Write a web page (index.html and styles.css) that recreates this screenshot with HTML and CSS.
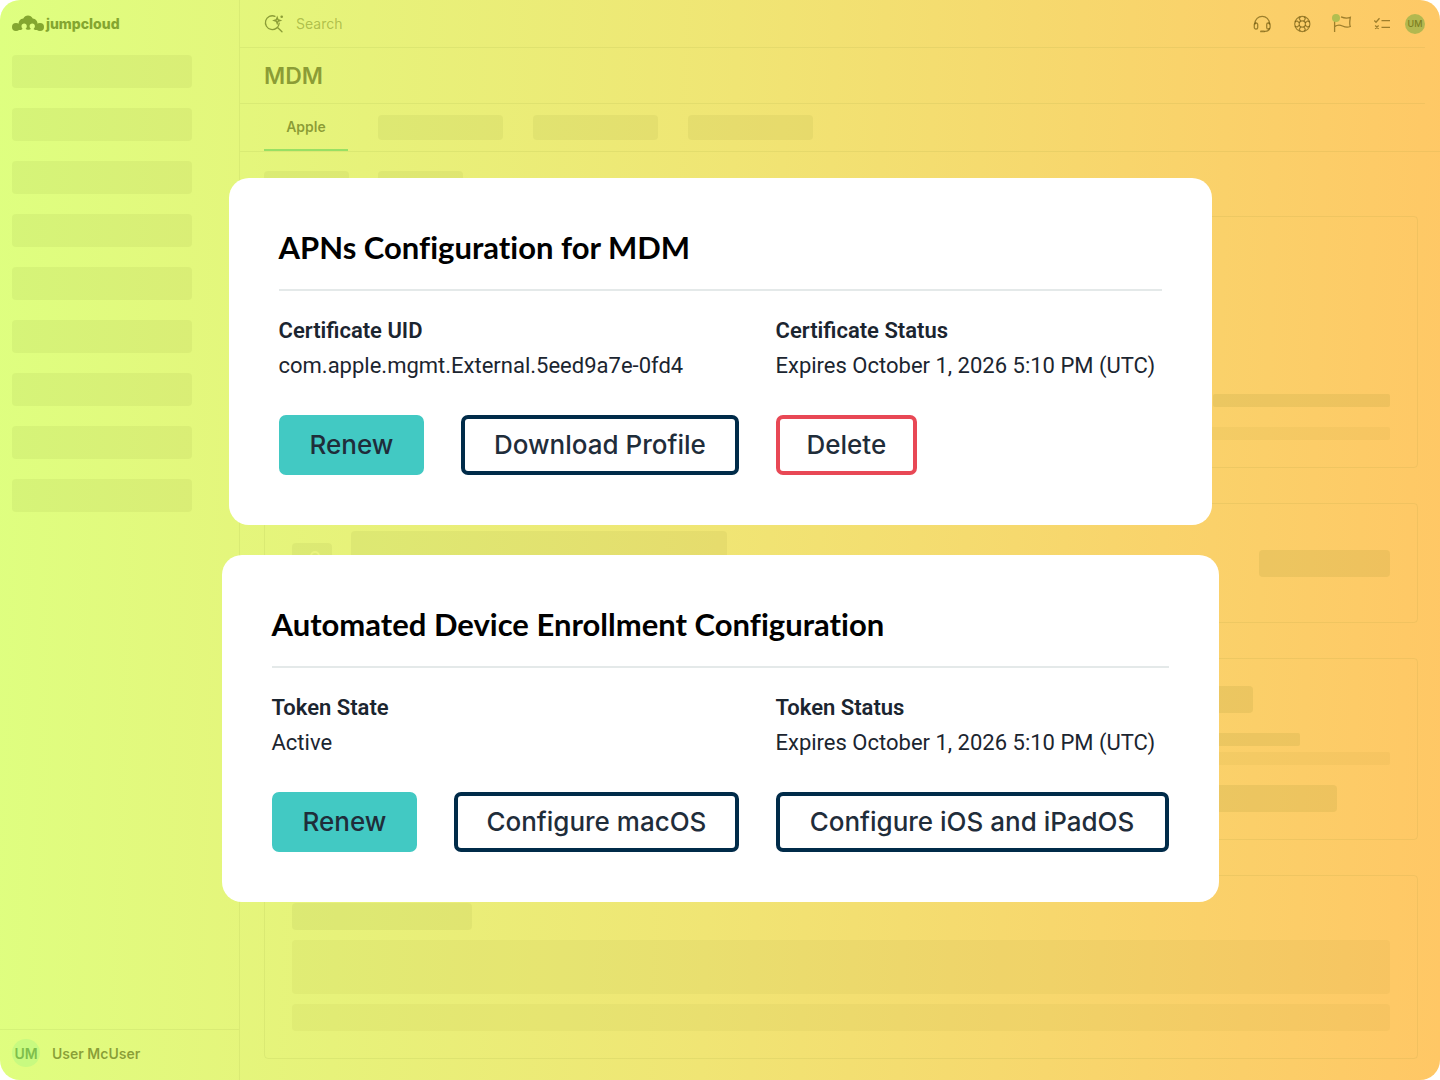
FILE: index.html
```html
<!DOCTYPE html>
<html lang="en">
<head>
<meta charset="utf-8">
<meta name="viewport" content="width=device-width, initial-scale=1">
<title>MDM</title>
<link rel="stylesheet" href="styles.css">
</head>
<body>
<div class="app">
  <aside class="sidebar">
    <a class="logo" href="#">
      <svg class="logo-mark" viewBox="0 0 32 16" width="32" height="18" fill="currentColor" aria-hidden="true">
        <circle cx="4" cy="11" r="4"/>
        <circle cx="28" cy="11" r="4"/>
        <path d="M6.500 8.500C6.500 5 8.500 2.800 11.300 2.600C12.200 .8 14 -.4 16 -.4C18 -.4 19.800 .8 20.700 2.600C23.500 2.700 25.600 5 25.700 8.500L25 14C23.600 14.200 22.200 13.700 21.600 12.900C22.300 12.300 22.900 11.500 22.900 10.300C22.900 8.700 21.800 7.600 20.300 7.600C18.700 7.600 17.600 8.700 17.600 10.300C17.600 11.500 18.100 12.200 18.900 12.800C17.900 14.100 14.600 14.100 13.600 12.800C14.400 12.200 14.800 11.500 14.800 10.300C14.800 8.700 13.700 7.600 12.100 7.600C10.600 7.600 9.500 8.700 9.500 10.300C9.500 11.500 10 12.300 10.600 12.800C10 13.700 8.600 14.200 7 14Z"/>
      </svg>
      <span>jumpcloud</span>
    </a>
    <nav class="side-nav" aria-label="Main">
      <span class="bone nav-bone"></span>
      <span class="bone nav-bone"></span>
      <span class="bone nav-bone"></span>
      <span class="bone nav-bone"></span>
      <span class="bone nav-bone"></span>
      <span class="bone nav-bone"></span>
      <span class="bone nav-bone"></span>
      <span class="bone nav-bone"></span>
      <span class="bone nav-bone"></span>
    </nav>
    <div class="user">
      <span class="avatar avatar-large">UM</span>
      <span>User McUser</span>
    </div>
  </aside>

  <main class="main">
    <header class="topbar">
      <label class="search">
        <svg viewBox="0 0 20 20" width="20" height="20" fill="none" stroke="currentColor" stroke-width="1.300" stroke-linecap="round" aria-hidden="true">
          <path d="M11 2.300A6.900 6.900 0 1 0 15.200 9.200M13.300 13.200L18 17.800"/>
          <path d="M13.200 3.400L14 5.700L16.300 6.500L14 7.300L13.200 9.600L12.400 7.300L10.100 6.500L12.400 5.700Z"/>
          <circle cx="17.700" cy="2.800" r="1.300" fill="currentColor" stroke="none"/>
        </svg>
        <input type="search" placeholder="Search" aria-label="Search">
      </label>
      <div class="tools">
        <button class="tool" type="button" aria-label="Support">
          <svg viewBox="0 0 20 20" width="20" height="20" fill="none" stroke="currentColor" stroke-width="1.300" stroke-linecap="round" aria-hidden="true">
            <path d="M3 10V9.500a7.200 7.200 0 0 1 14.400 0V10"/>
            <rect x="2.300" y="9" width="3.400" height="6" rx="1.600"/>
            <rect x="14.700" y="9" width="3.400" height="6" rx="1.600"/>
            <path d="M17.300 14.500c0 1.500-1.500 2.700-4.300 2.900"/>
            <path d="M9 17.400h3" stroke-width="1.900"/>
          </svg>
        </button>
        <button class="tool" type="button" aria-label="Help">
          <svg viewBox="0 0 20 20" width="20" height="20" fill="none" stroke="currentColor" stroke-width="1.200" aria-hidden="true">
            <circle cx="10.300" cy="10" r="7.600"/>
            <circle cx="10.300" cy="10" r="3.100"/>
            <path d="M8.300 2.800L7.300 4.700L8.800 7.200M12.300 2.800L13.300 4.700L11.800 7.200M8.300 17.200L7.300 15.300L8.800 12.800M12.300 17.200L13.300 15.300L11.800 12.800M3 8L5 7L7.500 8.700M3 12L5 13L7.500 11.300M17.600 8L15.600 7L13.100 8.700M17.600 12L15.600 13L13.100 11.300"/>
          </svg>
        </button>
        <button class="tool" type="button" aria-label="Announcements">
          <svg viewBox="0 0 20 20" width="20" height="20" fill="none" stroke="currentColor" stroke-width="1.300" aria-hidden="true">
            <path d="M2.600 6.500V18M2.600 12.600C6 10.300 8 10.800 10.500 12S15.500 13.800 18.300 12.500C17.300 10.500 17.300 9.500 18.300 3.300C15.500 4.500 13 4.500 9 2.900"/>
          </svg>
          <span class="tool-dot"></span>
        </button>
        <button class="tool" type="button" aria-label="Tasks">
          <svg viewBox="0 0 20 20" width="20" height="20" fill="none" stroke="currentColor" stroke-width="1.300" aria-hidden="true">
            <path d="M2.300 6.500L4 8.200L7.500 4.200M9.500 6.700H18M9.500 13.300H18M3.200 11.500L6.600 14.900M6.600 11.500L3.200 14.900"/>
          </svg>
        </button>
        <span class="avatar avatar-small">UM</span>
      </div>
    </header>
    <div class="title-bar"><h1>MDM</h1></div>
    <div class="tabs">
      <a class="tab" href="#" aria-current="page">Apple</a>
      <span class="bone tab-bone"></span>
      <span class="bone tab-bone"></span>
      <span class="bone tab-bone"></span>
    </div>
    <div class="content">
      <div class="subtabs">
        <span class="bone subtab-bone"></span>
        <span class="bone subtab-bone"></span>
      </div>
      <section class="panel panel-bottom">
        <span class="bone strong bar short-bar"></span>
        <span class="bone faint bar"></span>
      </section>
      <section class="panel panel-row">
        <span class="bone panel-icon">
          <svg viewBox="0 0 40 40" width="40" height="40" fill="none" stroke="#e9f37d" stroke-width="2" aria-hidden="true">
            <path d="M19 19v-6a4 4 0 0 1 8 0v6M14 19h17v12H14z"/>
          </svg>
        </span>
        <span class="bone panel-name"></span>
        <span class="bone strong panel-action"></span>
      </section>
      <section class="panel panel-stack">
        <span class="bone strong block stack-title"></span>
        <span class="bone strong bar stack-text"></span>
        <span class="bone faint bar stack-line"></span>
        <span class="bone strong block stack-action"></span>
      </section>
      <section class="panel panel-table">
        <span class="bone block table-title"></span>
        <span class="bone faint table-body"></span>
        <span class="bone faint block"></span>
      </section>
    </div>
  </main>

  <div class="overlay">
    <section class="card card-apns">
      <h2>APNs Configuration for MDM</h2>
      <div class="card-grid">
        <dl class="field"><dt>Certificate UID</dt><dd>com.apple.mgmt.External.5eed9a7e-0fd4</dd></dl>
        <dl class="field"><dt>Certificate Status</dt><dd>Expires October 1, 2026 5:10 PM (UTC)</dd></dl>
        <div class="actions">
          <button class="btn btn-primary" type="button">Renew</button>
          <button class="btn btn-grow" type="button">Download Profile</button>
        </div>
        <div class="actions">
          <button class="btn btn-danger" type="button">Delete</button>
        </div>
      </div>
    </section>
    <section class="card card-ade">
      <h2>Automated Device Enrollment Configuration</h2>
      <div class="card-grid">
        <dl class="field"><dt>Token State</dt><dd>Active</dd></dl>
        <dl class="field"><dt>Token Status</dt><dd>Expires October 1, 2026 5:10 PM (UTC)</dd></dl>
        <div class="actions">
          <button class="btn btn-primary" type="button">Renew</button>
          <button class="btn btn-grow" type="button">Configure macOS</button>
        </div>
        <div class="actions">
          <button class="btn btn-grow" type="button">Configure iOS and iPadOS</button>
        </div>
      </div>
    </section>
  </div>
</div>
</body>
</html>
```

FILE: styles.css
```css
:root {
  --ink: rgba(70, 88, 0, 0.56);
  --line: rgba(90, 110, 20, 0.08);
  --bone: rgba(100, 120, 30, 0.07);
  --bone-strong: rgba(110, 115, 20, 0.1);
  --bone-faint: rgba(110, 115, 20, 0.05);
  --navy: #002b49;
}

* { box-sizing: border-box; }

body {
  margin: 0;
  background: #fff;
  font-family: Inter, "Liberation Sans", sans-serif;
}

.app {
  position: relative;
  display: flex;
  min-height: 100vh;
  border-radius: 20px;
  overflow: hidden;
  color: var(--ink);
  background: linear-gradient(92deg, #deff80 0%, #f0e574 50%, #ffc765 100%);
}

/* Sidebar */
.sidebar {
  display: flex;
  flex-direction: column;
  flex: none;
  width: 240px;
  border-right: 1px solid var(--line);
}

.logo {
  display: flex;
  align-items: center;
  gap: 2px;
  height: 47px;
  padding: 0 12px;
  color: #84a630;
  font-size: 14px;
  font-weight: 800;
  text-decoration: none;
}

.logo-mark { overflow: visible; }

.side-nav {
  display: flex;
  flex-direction: column;
  gap: 20px;
  padding: 8px 12px;
}

.bone {
  display: block;
  border-radius: 4px;
  background: var(--bone);
}

.strong { background: var(--bone-strong); }
.faint { background: var(--bone-faint); }

.nav-bone { width: 180px; height: 33px; }

.user {
  display: flex;
  align-items: center;
  gap: 12px;
  margin-top: auto;
  padding: 9px 12px 13px;
  border-top: 1px solid var(--line);
  font-size: 14px;
  font-weight: 600;
}

.avatar {
  display: flex;
  align-items: center;
  justify-content: center;
  border-radius: 50%;
}

.avatar-large {
  width: 28px;
  height: 28px;
  background: #c8fa80;
  color: #7fbe4c;
}

.avatar-small {
  width: 20px;
  height: 20px;
  background: #b2b850;
  color: #7e7f20;
  font-size: 9px;
  font-weight: 500;
}

/* Main column */
.main {
  display: flex;
  flex-direction: column;
  flex: 1;
  min-width: 0;
}

.topbar {
  display: flex;
  align-items: center;
  justify-content: space-between;
  height: 48px;
  margin-right: 15px;
  padding-left: 24px;
  border-bottom: 1px solid var(--line);
}

.search {
  display: flex;
  align-items: center;
  gap: 12px;
}

.search input {
  width: 240px;
  padding: 0;
  border: 0;
  outline: 0;
  background: none;
  color: inherit;
  font: 400 14px/20px Inter, "Liberation Sans", sans-serif;
}

.search input::placeholder { color: rgba(90, 110, 0, 0.4); opacity: 1; }

.tools {
  display: flex;
  align-items: center;
  gap: 20px;
}

.tool {
  position: relative;
  display: flex;
  padding: 0;
  border: 0;
  background: none;
  color: rgba(90, 70, 0, 0.58);
}

.tool-dot {
  position: absolute;
  top: 0;
  left: 0;
  width: 8px;
  height: 8px;
  border-radius: 50%;
  background: #b2be50;
}

.tools .avatar { margin-left: -7px; }

.title-bar {
  display: flex;
  align-items: center;
  height: 56px;
  margin-right: 15px;
  padding-left: 24px;
  border-bottom: 1px solid var(--line);
}

.title-bar h1 {
  margin: 0;
  font-size: 23px;
  font-weight: 600;
}

.tabs {
  display: flex;
  align-items: center;
  gap: 30px;
  height: 48px;
  padding-left: 24px;
  border-bottom: 1px solid var(--line);
}

.tab {
  display: flex;
  align-items: center;
  justify-content: center;
  align-self: stretch;
  width: 84px;
  border-bottom: 2px solid #98e064;
  color: inherit;
  font-size: 14px;
  font-weight: 600;
  text-decoration: none;
}

.tab-bone { width: 125px; height: 25px; }

.content {
  display: flex;
  flex-direction: column;
  flex: 1;
  gap: 35px;
  padding: 19px 22px 21px 24px;
}

.subtabs { display: flex; gap: 29px; margin-bottom: -15px; }
.subtab-bone { width: 85px; height: 25px; }

.panel {
  display: flex;
  padding: 27px;
  border: 1px solid var(--line);
  border-radius: 4px;
}

.panel-bottom {
  flex-direction: column;
  justify-content: flex-end;
  align-items: flex-end;
  gap: 20px;
  min-height: 252px;
}

.bar { width: 100%; height: 13px; border-radius: 2px; }
.short-bar { width: 177px; }

.panel-row {
  align-items: center;
  gap: 19px;
  min-height: 120px;
}

.panel-icon { width: 40px; height: 40px; }
.panel-name { width: 376px; height: 64px; }
.panel-action { width: 131px; height: 27px; margin-left: auto; }

.panel-stack { flex-direction: column; }
.block { width: 100%; height: 27px; }
.stack-title { width: 961px; margin-bottom: 20px; }
.stack-text { width: 1008px; margin-bottom: 6px; }
.stack-line { margin-bottom: 20px; }
.stack-action { width: 1045px; }

.panel-table { flex-direction: column; gap: 10px; }
.table-title { width: 180px; }
.table-body { height: 54px; }

/* Foreground cards */
.overlay {
  position: absolute;
  inset: 0;
  display: flex;
  flex-direction: column;
  align-items: center;
  justify-content: center;
  gap: 30px;
}

.card {
  padding: 50px;
  border-radius: 20px;
  background: #fff;
  color: #1b2530;
}

.card-apns { width: 983px; --left: 460px; }
.card-ade { width: 997px; --left: 467px; }

.card h2 {
  margin: 0 0 22px;
  padding-bottom: 23px;
  border-bottom: 2px solid #e4e9e9;
  color: #000;
  font: 700 31px/38px Lato, "Open Sans", sans-serif;
  font-variant-ligatures: none;
}

.card-grid {
  display: grid;
  grid-template-columns: var(--left) 1fr;
  gap: 32px 37px;
}

.field {
  margin: 0;
  font: 400 22px/35px Roboto, "Liberation Sans", sans-serif;
  white-space: nowrap;
}

.field dt { font-weight: 600; }
.field dd { margin: 0; }

.actions { display: flex; gap: 37px; }

.btn {
  height: 60px;
  padding: 0 27px;
  border: 4px solid var(--navy);
  border-radius: 7px;
  background: #fff;
  color: #1f2d3a;
  font: 500 26px/32px Inter, "Liberation Sans", sans-serif;
  white-space: nowrap;
}

.btn-primary { border-color: #42c9c3; background: #42c9c3; }
.btn-danger { border-color: #e84855; }
.btn-grow { flex: 1; }
```
